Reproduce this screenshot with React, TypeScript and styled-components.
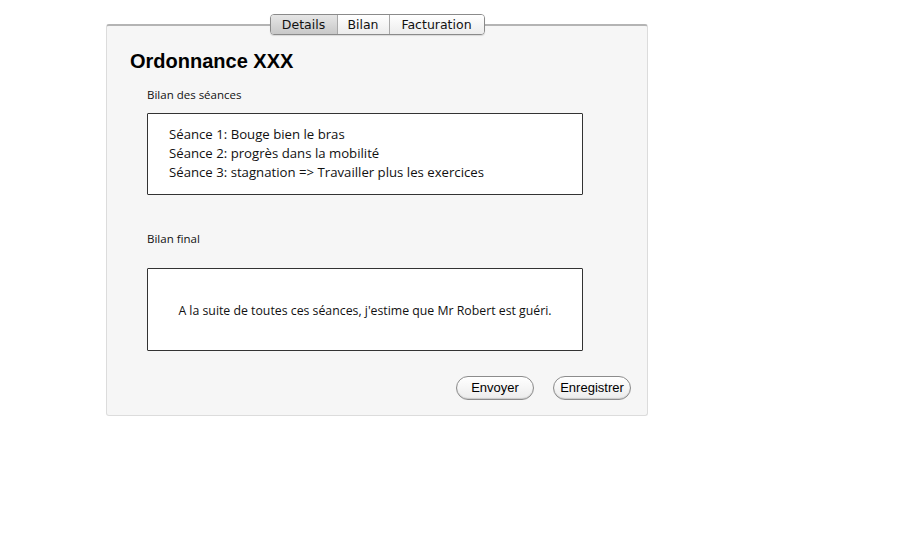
import React from "react";
import styled, { createGlobalStyle } from "styled-components";

const Global = createGlobalStyle`
  html, body { margin: 0; padding: 0; background: #ffffff; }
  body { font-family: "Liberation Sans", Arial, sans-serif; }
`;

const Page = styled.div`
  padding: 14px 0 0 106px;
`;

const Frame = styled.div`
  width: 542px;
  display: flex;
  flex-direction: column;
`;

const TabBar = styled.div`
  display: flex;
  justify-content: center;
  margin-bottom: -11px;
  position: relative;
  z-index: 1;
`;

const Tabs = styled.div`
  display: flex;
  height: 21px;
  border: 1px solid #8a8a8a;
  border-radius: 4px;
  overflow: hidden;
  box-sizing: border-box;
  box-shadow: 0 1px 1px rgba(0, 0, 0, 0.12);
`;

const Tab = styled.div<{ $w: number; $active?: boolean; $last?: boolean }>`
  width: ${(p) => p.$w}px;
  box-sizing: border-box;
  display: flex;
  align-items: center;
  justify-content: center;
  font-family: "DejaVu Sans", "Liberation Sans", sans-serif;
  font-size: 12.5px;
  color: #111;
  border-right: ${(p) => (p.$last ? "none" : "1px solid #a8a8a8")};
  background: ${(p) =>
    p.$active
      ? "linear-gradient(#e6e6e6, #c8c8c8)"
      : "linear-gradient(#ffffff, #ececec)"};
`;

const Panel = styled.div`
  height: 392px;
  box-sizing: border-box;
  background: #f6f6f6;
  border: 1px solid #dcdcdc;
  border-top: 2px solid #b4b4b4;
  border-radius: 3px;
  display: flex;
  flex-direction: column;
`;

const Title = styled.h1`
  margin: 0;
  padding: 23px 0 0 23px;
  font-family: "Liberation Sans", Arial, sans-serif;
  font-weight: bold;
  font-size: 20px;
  line-height: 24px;
  color: #000;
`;

const Section = styled.div`
  padding: 0 0 0 40px;
  display: flex;
  flex-direction: column;
`;

const Label = styled.div<{ $top: number; $gap: number }>`
  margin-top: ${(p) => p.$top}px;
  margin-bottom: ${(p) => p.$gap}px;
  font-family: "Open Sans", "DejaVu Sans", sans-serif;
  font-size: 11.5px;
  line-height: 14px;
  color: #111;
`;

const Box = styled.div<{ $h: number; $center?: boolean }>`
  width: 436px;
  height: ${(p) => p.$h}px;
  box-sizing: border-box;
  background: #ffffff;
  border: 1.5px solid #333;
  border-radius: 1px;
  display: flex;
  flex-direction: column;
  justify-content: ${(p) => (p.$center ? "center" : "flex-start")};
  align-items: ${(p) => (p.$center ? "center" : "flex-start")};
  padding: ${(p) => (p.$center ? "2px 0 0 0" : "11px 0 0 21px")};
  font-family: "Open Sans", "DejaVu Sans", sans-serif;
  font-size: ${(p) => (p.$center ? "12.3px" : "13.2px")};
  line-height: 19px;
  color: #111;
`;

const Line = styled.div`
  white-space: nowrap;
`;

const Buttons = styled.div`
  display: flex;
  justify-content: flex-end;
  gap: 19px;
  margin-top: 25px;
  padding-right: 16px;
`;

const Button = styled.button`
  width: 78px;
  height: 24px;
  box-sizing: border-box;
  border: 1.5px solid #8c8c8c;
  border-radius: 12px;
  background: linear-gradient(#ffffff, #ececec);
  box-shadow: inset 0 -1px 1px rgba(0, 0, 0, 0.15);
  font-family: "Liberation Sans", Arial, sans-serif;
  font-size: 13px;
  line-height: 16px;
  color: #000;
  padding: 0 0 1px 0;
  display: flex;
  align-items: center;
  justify-content: center;
`;

export default function App() {
  return (
    <>
      <Global />
      <Page>
        <Frame>
          <TabBar>
            <Tabs>
              <Tab $w={67} $active>Details</Tab>
              <Tab $w={52}>Bilan</Tab>
              <Tab $w={94} $last>Facturation</Tab>
            </Tabs>
          </TabBar>
          <Panel>
            <Title>Ordonnance XXX</Title>
            <Section>
              <Label $top={15} $gap={11}>Bilan des séances</Label>
              <Box $h={82}>
                <Line>Séance 1: Bouge bien le bras</Line>
                <Line>Séance 2: progrès dans la mobilité</Line>
                <Line>Séance 3: stagnation =&gt; Travailler plus les exercices</Line>
              </Box>
              <Label $top={37} $gap={22}>Bilan final</Label>
              <Box $h={83} $center>
                <Line>A la suite de toutes ces séances, j'estime que Mr Robert est guéri.</Line>
              </Box>
            </Section>
            <Buttons>
              <Button>Envoyer</Button>
              <Button>Enregistrer</Button>
            </Buttons>
          </Panel>
        </Frame>
      </Page>
    </>
  );
}
